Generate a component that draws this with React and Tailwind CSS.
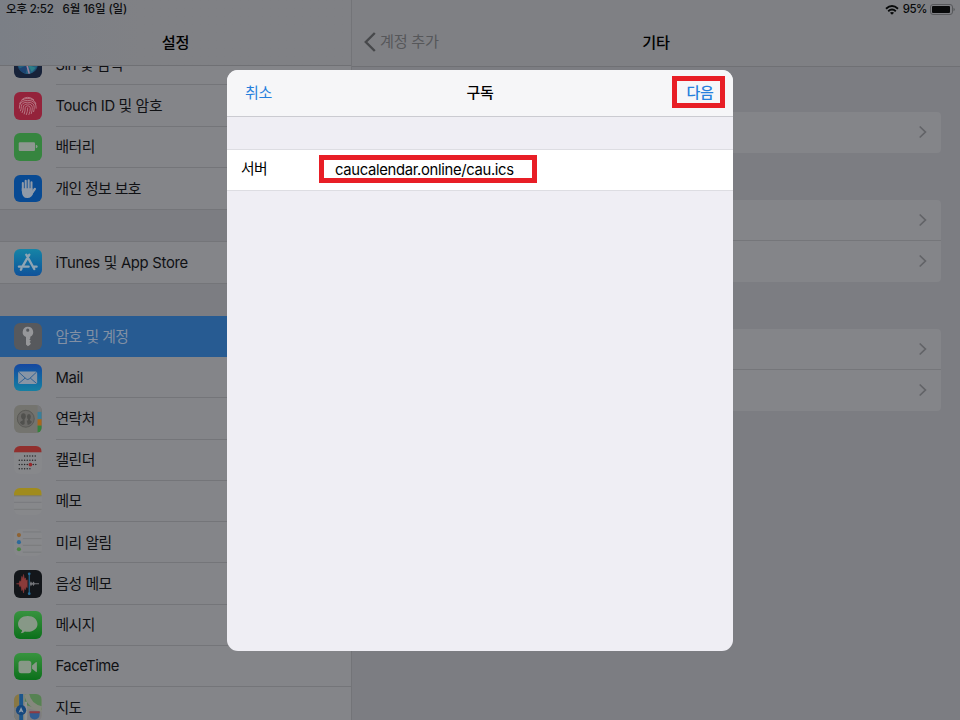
import React from 'react';

const FONT = "font-['Inter','Noto_Sans_CJK_KR',sans-serif]";

function Tile({ className = '', children }) {
  return (
    <svg viewBox="0 0 28 28" className={`block size-[27.5px] shrink-0 rounded-[6px] ${className}`}>
      {children}
    </svg>
  );
}

function SiriIcon() {
  return (
    <Tile className="bg-[#172239]">
      <circle cx="14" cy="13" r="10.5" fill="#1d4a70" />
      <path d="M4 14 Q10 11 14 14 Q19 11 24 14 Q21 23 14 23.5 Q7 23 4 14Z" fill="#25607f" />
      <path d="M14 14 L5 18 Q8 22 12 23Z" fill="#1d4372" />
      <path d="M12.5 12 L15.5 23" stroke="#a07f9b" strokeWidth="1.6" />
      <path d="M14 14 L22 17 L18 21Z" fill="#2d7f88" />
    </Tile>
  );
}

function TouchIdIcon() {
  return (
    <Tile className="bg-[#94233b]">
      <g fill="none" stroke="#bd8590" strokeWidth="0.85" strokeLinecap="round">
        <path d="M8 7.8 Q14 2.8 20 7.8" />
        <path d="M5.7 12 Q7.5 6.6 14 6.6 Q20.5 6.6 22.3 12" />
        <path d="M5.4 16.5 Q5 8.6 14 8.5 Q23 8.6 22.6 16.5" />
        <path d="M6.6 19.2 Q7.6 17 7.4 15 Q7.6 10.4 14 10.4 Q20.6 10.5 20.6 15.5 Q20.6 18 20 20" />
        <path d="M8.3 21 Q9.5 18.5 9.4 15.6 Q9.6 12.3 14 12.2 Q18.6 12.3 18.6 16 Q18.6 19.5 17.6 22" />
        <path d="M10.4 22.3 Q11.6 19 11.4 16 Q11.6 14.1 14 14 Q16.6 14.1 16.6 16.5 Q16.5 20 15.2 23" />
        <path d="M12.6 23 Q13.9 20 14 16.2" />
      </g>
    </Tile>
  );
}

function BatteryIcon() {
  return (
    <Tile className="bg-[#36853f]">
      <rect x="4.8" y="9.4" width="16.6" height="8.8" rx="1.2" fill="#8e9790" />
      <path d="M22.2 12 Q24 12.3 24 13.8 Q24 15.3 22.2 15.6Z" fill="#8e9790" />
    </Tile>
  );
}

function HandIcon() {
  return (
    <Tile className="bg-[#084a93]">
      <g stroke="#909aa8" strokeLinecap="round" strokeWidth="2.1" fill="none">
        <path d="M9 16 V8.2M11.9 14 V5.8M14.9 14 V5.4M17.8 15 V7.4" />
        <path d="M17.4 19.5 L21.2 14.3" strokeWidth="2.4" />
      </g>
      <path d="M7.95 13.5 H18.85 V16 L20 17 Q18.5 23.5 13.5 23.5 Q8 23.5 7.95 16Z" fill="#909aa8" />
    </Tile>
  );
}

function AppStoreIcon() {
  return (
    <Tile className="bg-linear-to-b from-[#1784a6] to-[#10529a]">
      <g stroke="#8fa4b3" strokeWidth="2.4" strokeLinecap="round" fill="none">
        <path d="M15.6 5.8 L9 17.2M12.5 5.8 L20.6 20.4M5 17.9 H14.9M19.8 17.9 H23M7.6 20 L7 21.1" />
      </g>
    </Tile>
  );
}

function KeyIcon() {
  return (
    <Tile className="bg-[#57595d]">
      <path
        fillRule="evenodd"
        d="M14 3.8 A5.4 5.4 0 0 1 16.6 14 V15.8 L15.6 16.8 L17.2 18 L15.8 19.3 L17.2 20.6 L16.4 22.1 L14.2 23.7 L12.2 22 V14.2 A5.4 5.4 0 0 1 14 3.8Z M14 5.7 A1.6 1.6 0 1 0 14 8.9 A1.6 1.6 0 1 0 14 5.7Z"
        fill="#96979a"
      />
    </Tile>
  );
}

function MailIcon() {
  return (
    <Tile className="bg-linear-to-b from-[#1547a0] to-[#1780a2]">
      <rect x="4.2" y="7.6" width="19.4" height="12.8" rx="1.6" fill="#8795a5" />
      <path d="M4.8 8.2 L12.4 15.2 Q14 16.4 15.5 15.2 L23 8.2M4.8 19.8 L11.4 14.3M23 19.8 L16.5 14.3" fill="none" stroke="#245b91" strokeWidth="0.9" />
    </Tile>
  );
}

function ContactsIcon() {
  return (
    <Tile className="bg-[#74746f]">
      <rect x="24" y="0" width="4" height="7" fill="#77787a" />
      <rect x="24" y="7" width="4" height="7.5" fill="#397f9b" />
      <rect x="24" y="14.5" width="4" height="6.5" fill="#a9671b" />
      <rect x="24" y="21" width="4" height="7" fill="#35813c" />
      <circle cx="12" cy="14" r="8.6" fill="#6b6a67" stroke="#565653" strokeWidth="0.9" />
      <g fill="#51514e">
        <ellipse cx="9.6" cy="11.5" rx="2.4" ry="3" />
        <ellipse cx="15.2" cy="12" rx="2" ry="2.8" />
        <path d="M6 17.6 Q7 16.2 8.8 15.8 V13 H10.8 V19.4 L9 20.4 Q6.8 19.6 6 17.6Z M13 16 L14.3 15.4 V13.5 H16.3 V15.6 Q18 16.4 18.2 17.4 Q17 19.8 14 20.4Z" />
      </g>
    </Tile>
  );
}

const CALENDAR_DOTS = [
  [10.2, [10.8, 13.5, 16.2, 18.9, 21.6]],
  [14.6, [5.4, 8.1, 10.8, 13.5, 16.2, 18.9, 21.6]],
  [18.9, [5.4, 8.1, 10.8, 13.5, 19.6, 22.2]],
  [23.2, [5.4, 8.1, 10.8, 13.5, 16.2]],
];

function CalendarIcon() {
  return (
    <Tile className="bg-[#87888b]">
      <rect width="28" height="6.4" fill="#912f2d" />
      {CALENDAR_DOTS.map(([y, xs]) =>
        xs.map((x) => <circle key={`${x}-${y}`} cx={x} cy={y} r="0.75" fill="#28282a" />)
      )}
      <circle cx="16.7" cy="18.9" r="1.9" fill="#97282b" />
    </Tile>
  );
}

function NotesIcon() {
  return (
    <Tile className="bg-[#87888b]">
      <rect width="28" height="7.6" fill="#a08b1d" />
      <path d="M0 8 H28" stroke="#77735b" strokeWidth="0.7" />
      <path d="M0 14.6 H28M0 21.7 H28" stroke="#737477" strokeWidth="0.7" />
    </Tile>
  );
}

function RemindersIcon() {
  return (
    <Tile className="bg-[#87888b]">
      <path d="M9 3 H28M9 9.8 H28M9 16.6 H28M9 23.6 H28" stroke="#737477" strokeWidth="0.7" />
      <circle cx="5" cy="6.2" r="2.1" fill="#8f6333" />
      <circle cx="5" cy="13.4" r="2.1" fill="#2c6a9b" />
      <circle cx="5" cy="20.6" r="2.1" fill="#4c8643" />
    </Tile>
  );
}

function VoiceMemoIcon() {
  return (
    <Tile className="bg-[#13161a]">
      <path d="M2.5 14 H5 L6 11 L7 12 L8 6.5 L9 9 L9.7 4.6 L10.6 9.5 L11.5 8 L12.4 11 L13.5 10 V18 L12.4 17 L11.5 20 L10.6 18 L9.7 23.3 L9 19 L8 21 L7 16 L6 17 L5 14Z" fill="#8a3b3a" stroke="#8a3b3a" strokeWidth="0.6" />
      <path d="M16 14 L17.2 11.5 L18.5 13.4 L20 11.8 L21 13.5 H25.5 V14.5 H21 L20 16.2 L18.5 14.6 L17.2 16.8Z" fill="#74757a" />
      <path d="M15.5 3.8 V24.2" stroke="#266b96" strokeWidth="1.1" />
      <circle cx="15.5" cy="3.9" r="1.4" fill="#266b96" />
      <circle cx="15.5" cy="24.1" r="1.4" fill="#266b96" />
    </Tile>
  );
}

function MessagesIcon() {
  return (
    <Tile className="bg-linear-to-b from-[#37933f] to-[#08701a]">
      <path d="M14 5 C19.8 5 23.9 8.6 23.9 13.2 C23.9 17.8 19.8 21.2 14 21.2 Q12.4 21.2 11 20.8 Q9.6 22.4 6.8 22.7 Q8.3 21.2 8.2 19.7 C5.6 18.2 4.1 15.9 4.1 13.2 C4.1 8.6 8.2 5 14 5Z" fill="#879887" />
    </Tile>
  );
}

function FaceTimeIcon() {
  return (
    <Tile className="bg-linear-to-b from-[#37933f] to-[#08701a]">
      <rect x="4.6" y="8" width="13" height="12.5" rx="2.6" fill="#879887" />
      <path d="M18.4 12.6 L22.2 9.3 Q23.3 8.6 23.3 9.9 V18.7 Q23.3 20 22.2 19.2 L18.4 16Z" fill="#879887" />
    </Tile>
  );
}

function MapsIcon() {
  return (
    <Tile className="bg-[#85867e]">
      <path d="M0 0 H5 V28 H0Z" fill="#887743" />
      <path d="M0 14 L5 12 V28 H0Z" fill="#777a7c" />
      <path d="M11 0 H28 V16 L11 11Z" fill="#568253" />
      <path d="M13 0 Q15 12 28 15" stroke="#85887d" strokeWidth="5" fill="none" />
      <path d="M15 15 L28 18 V28 H13Z" fill="#7d7c80" />
      <path d="M12 8 V28" stroke="#908f91" strokeWidth="2.5" />
      <path d="M7.3 0 V28" stroke="#1c568c" strokeWidth="4" />
      <circle cx="7.2" cy="16.5" r="5.2" fill="#16477d" />
      <path d="M7.2 13.2 L9.8 19.2 L7.2 17.9 L4.6 19.2Z" fill="#8d9baa" />
      <path d="M16 18 H26 V21 Q26 25 21 26 Q16 25 16 21Z" fill="#315c91" />
      <path d="M15.8 17.6 H26.2 V19.6 H15.8Z" fill="#8d3a42" />
    </Tile>
  );
}

function Row({ icon, label, tracking = 'tracking-[-0.5px]', selected = false, last = false }) {
  return (
    <div className={`flex h-[41.25px] shrink-0 pl-[14px] ${selected ? 'bg-[#275b92] text-[#8290a4]' : 'bg-[#848589] text-[#101114]'}`}>
      <div className="flex w-[41.5px] shrink-0 items-center">{icon}</div>
      <div className={`flex flex-1 items-center whitespace-pre pt-[1px] text-[14.8px] ${last || selected ? '' : 'border-b border-[#747579]'} ${tracking}`}>
        {label}
      </div>
    </div>
  );
}

function Chevron() {
  return (
    <svg viewBox="0 0 10 14" className="h-[14px] w-[10px]" fill="none" stroke="#626367" strokeWidth="1.7">
      <path d="M1.7 1.5 L7.4 7 L1.7 12.5" />
    </svg>
  );
}

function Group({ rows, className = '' }) {
  return (
    <div className={`flex shrink-0 flex-col overflow-hidden rounded-[4px] bg-[#848589] ${className}`}>
      {Array.from({ length: rows }, (_, i) => (
        <div key={i} className={`flex h-[41px] items-center justify-end pb-[1px] pr-[13px] ${i < rows - 1 ? 'border-b border-[#75767a]' : ''}`}>
          <Chevron />
        </div>
      ))}
    </div>
  );
}

function Sidebar() {
  return (
    <div className="flex h-[720px] w-[352px] shrink-0 flex-col overflow-hidden border-r border-[#737478] bg-[#7c7d82]">
      <div className="flex h-[66px] shrink-0 flex-col border-b border-[#6f7074] bg-linear-to-r from-[#7b7f86] to-[#808185] to-40%">
        <div className="flex h-[19px] items-center gap-[9px] whitespace-pre pl-[6px] text-[11.5px] font-medium text-[#0d0e10]">
          <span className="tracking-[-0.2px]">오후 2:52</span>
          <span className="tracking-[-0.1px]">6월 16일 (일)</span>
        </div>
        <div className="flex h-[46px] items-center justify-center pt-[2px] text-[15.2px] font-medium tracking-[-0.3px] text-black">설정</div>
      </div>
      <div className="flex min-h-0 flex-1 flex-col overflow-hidden">
        <div className="-mt-[22px] flex flex-col">
          <Row icon={<SiriIcon />} label="Siri 및 검색" />
          <Row icon={<TouchIdIcon />} label="Touch ID 및 암호" tracking="tracking-[-0.35px]" />
          <Row icon={<BatteryIcon />} label="배터리" />
          <Row icon={<HandIcon />} label="개인 정보 보호" tracking="tracking-[-0.6px]" last />
        </div>
        <div className="h-[33px] shrink-0 border-y border-[#747579]" />
        <Row icon={<AppStoreIcon />} label="iTunes 및 App Store" tracking="tracking-[-0.28px]" last />
        <div className="h-[32.5px] shrink-0 border-t border-[#747579]" />
        <Row icon={<KeyIcon />} label="암호 및 계정" selected />
        <Row icon={<MailIcon />} label="Mail" tracking="tracking-[-0.3px]" />
        <Row icon={<ContactsIcon />} label="연락처" />
        <Row icon={<CalendarIcon />} label="캘린더" />
        <Row icon={<NotesIcon />} label="메모" />
        <Row icon={<RemindersIcon />} label="미리 알림" />
        <Row icon={<VoiceMemoIcon />} label="음성 메모" />
        <Row icon={<MessagesIcon />} label="메시지" />
        <Row icon={<FaceTimeIcon />} label="FaceTime" />
        <Row icon={<MapsIcon />} label="지도" />
      </div>
    </div>
  );
}

function Detail() {
  return (
    <div className="flex h-[720px] flex-1 flex-col bg-[#7c7d82]">
      <div className="flex h-[67px] shrink-0 flex-col border-b border-[#6f7074] bg-[#7f8084]">
        <div className="flex h-[19px] items-center justify-end pr-[5px] text-[#08090a]">
          <svg viewBox="0 0 14 10" className="mr-[4px] h-[10px] w-[14px]" fill="none" stroke="currentColor" strokeWidth="1.9">
            <path d="M1 3.7 Q7 -1.6 13 3.7" />
            <path d="M3.2 6.2 Q7 2.9 10.8 6.2" />
            <path d="M7 9.8 L4.9 7.8 Q7 6.2 9.1 7.8Z" fill="currentColor" stroke="none" />
          </svg>
          <span className="mr-[3px] text-[11.5px] font-medium tracking-[-0.5px]">95%</span>
          <svg viewBox="0 0 25 11" className="h-[11px] w-[25px]">
            <rect x="0.5" y="0.5" width="22" height="10" rx="2.5" fill="none" stroke="#57585b" />
            <rect x="2" y="2" width="18" height="7" rx="1" fill="currentColor" />
            <path d="M23.5 3.7 Q24.8 4.2 24.8 5.5 Q24.8 6.8 23.5 7.3Z" fill="#57585b" />
          </svg>
        </div>
        <div className="grid h-[46px] grid-cols-3 items-center">
          <div className="flex items-center gap-[4px] pl-[12px] text-[15.2px] tracking-[-0.3px] text-[#56575a]">
            <svg viewBox="0 0 12 20" className="h-[20px] w-[12px]" fill="none" stroke="#47484b" strokeWidth="2.4">
              <path d="M10.8 1 L1.8 10 L10.8 19" />
            </svg>
            <span className="pt-[1px]">계정 추가</span>
          </div>
          <div className="pt-[2px] text-center text-[15.2px] font-medium tracking-[-0.3px] text-black">기타</div>
        </div>
      </div>
      <div className="flex flex-col px-[19px] pt-[45px]">
        <Group rows={1} />
        <Group rows={2} className="mt-[47px]" />
        <Group rows={2} className="mt-[47px]" />
      </div>
    </div>
  );
}

function SubscribeDialog() {
  return (
    <div className="absolute left-[227px] top-[69.5px] flex h-[581px] w-[506px] flex-col overflow-hidden rounded-[11px] bg-[#efeef4]">
      <div className="grid h-[47px] shrink-0 grid-cols-3 items-center border-b border-[#cbcbd1] bg-[#f6f6f8] pb-[1px] pl-[18px] pr-[8px] text-[15px] tracking-[-0.3px]">
        <span className="pt-[3px] text-[#267fdc]">취소</span>
        <span className="pr-[10px] pt-[3px] text-center font-medium text-black">구독</span>
        <span className="flex h-[32px] w-[53px] items-center justify-center justify-self-end border-[5px] border-[#e81e26] pl-[3px] pt-[2px] font-medium text-[#267fdc]">
          다음
        </span>
      </div>
      <div className="mt-[32.5px] flex h-[41.5px] shrink-0 items-center border-y border-[#dddde2] bg-white pb-[1px] pl-[14px] text-black">
        <span className="w-[78px] text-[14.8px] tracking-[-0.5px]">서버</span>
        <span className="flex h-[28px] w-[218px] items-center border-[5px] border-[#e81e26] pl-[11px] pt-[1px] text-[14.8px] tracking-[-0.32px]">
          caucalendar.online/cau.ics
        </span>
      </div>
    </div>
  );
}

export default function App() {
  return (
    <div className={`relative flex h-[720px] w-[960px] overflow-hidden ${FONT}`}>
      <Sidebar />
      <Detail />
      <SubscribeDialog />
    </div>
  );
}
